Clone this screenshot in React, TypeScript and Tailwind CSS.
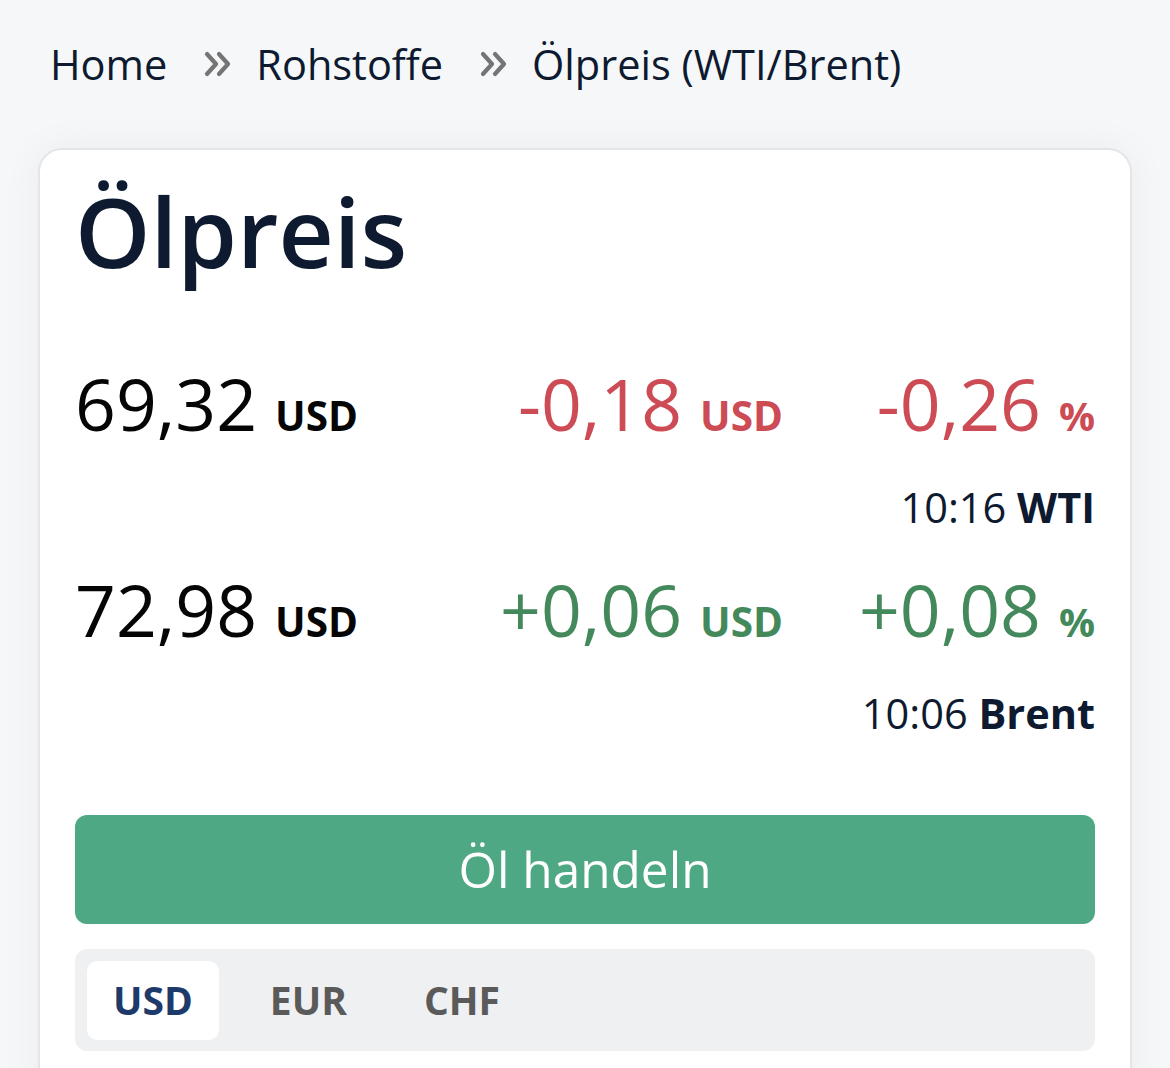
import React from "react";

const font = { fontFamily: '"Open Sans", "Noto Sans", sans-serif' };

function DoubleChevron() {
  return (
    <svg width="28" height="26" viewBox="0 0 28 26" fill="none" className="shrink-0">
      <path d="M3 3 L12 13 L3 23" stroke="#757575" strokeWidth="4.2" strokeLinecap="round" strokeLinejoin="round" />
      <path d="M15 3 L24 13 L15 23" stroke="#757575" strokeWidth="4.2" strokeLinecap="round" strokeLinejoin="round" />
    </svg>
  );
}

type Quote = {
  price: string;
  change: string;
  pct: string;
  up: boolean;
  time: string;
  name: string;
};

const quotes: Quote[] = [
  { price: "69,32", change: "-0,18", pct: "-0,26", up: false, time: "10:16", name: "WTI" },
  { price: "72,98", change: "+0,06", pct: "+0,08", up: true, time: "10:06", name: "Brent" },
];

function QuoteBlock({ q, first }: { q: Quote; first: boolean }) {
  const color = q.up ? "text-[#43895b]" : "text-[#cc4b55]";
  return (
    <div className={first ? "mt-[81px]" : "mt-[44px]"}>
      <div className="grid grid-cols-[1fr_auto_312px] items-baseline leading-[70px]">
        <div className="text-[71.5px] font-medium text-[#050505]">
          {q.price}
          <span className="ml-[18px] text-[40.5px] font-bold">USD</span>
        </div>
        <div className={`text-right text-[71.5px] font-medium ${color}`}>
          {q.change}
          <span className="ml-[18px] text-[40.5px] font-bold">USD</span>
        </div>
        <div className={`text-right text-[71.5px] font-medium ${color}`}>
          {q.pct}
          <span className="ml-[18px] text-[40px] font-bold">%</span>
        </div>
      </div>
      <div className="mt-[32px] text-right text-[41.5px] leading-[48px] text-[#0d1a30]">
        {q.time} <span className="font-bold">{q.name}</span>
      </div>
    </div>
  );
}

export default function App() {
  return (
    <div style={font} className="min-h-[1068px] w-full overflow-hidden bg-[#f6f7f8]">
      <nav className="flex items-center pl-[50px] pt-[40px] text-[41.5px] leading-[48px] text-[#0d1a30]">
        <span>Home</span>
        <span className="ml-[37px] mr-[24px] flex items-center">
          <DoubleChevron />
        </span>
        <span>Rohstoffe</span>
        <span className="ml-[37px] mr-[24px] flex items-center">
          <DoubleChevron />
        </span>
        <span>Ölpreis (WTI/Brent)</span>
      </nav>

      <section className="mx-[38px] mt-[60px] h-[960px] rounded-[24px] border-2 border-[#e3e5e9] bg-white px-[35px] pt-[23px] shadow-[0_0_40px_rgba(0,0,0,0.05)]">
        <h1 className="text-[96px] font-semibold leading-[115px] text-[#0d1a30]">Ölpreis</h1>

        {quotes.map((q, i) => (
          <QuoteBlock key={q.name} q={q} first={i === 0} />
        ))}

        <button className="mt-[78px] flex h-[109px] w-full items-center justify-center rounded-[12px] bg-[#4ea884] text-[49.5px] font-medium text-white">
          Öl handeln
        </button>

        <div className="mt-[25px] flex h-[102px] items-center gap-[25px] rounded-[12px] bg-[#eff0f2] px-[12px]">
          <div className="flex h-[79px] items-center rounded-[10px] bg-white px-[26px] text-[39px] font-bold text-[#1e3a6a]">
            USD
          </div>
          <div className="flex h-[79px] items-center px-[26px] text-[39px] font-bold text-[#5a5a5a]">EUR</div>
          <div className="flex h-[79px] items-center px-[26px] text-[39px] font-bold text-[#5a5a5a]">CHF</div>
        </div>
      </section>
    </div>
  );
}
